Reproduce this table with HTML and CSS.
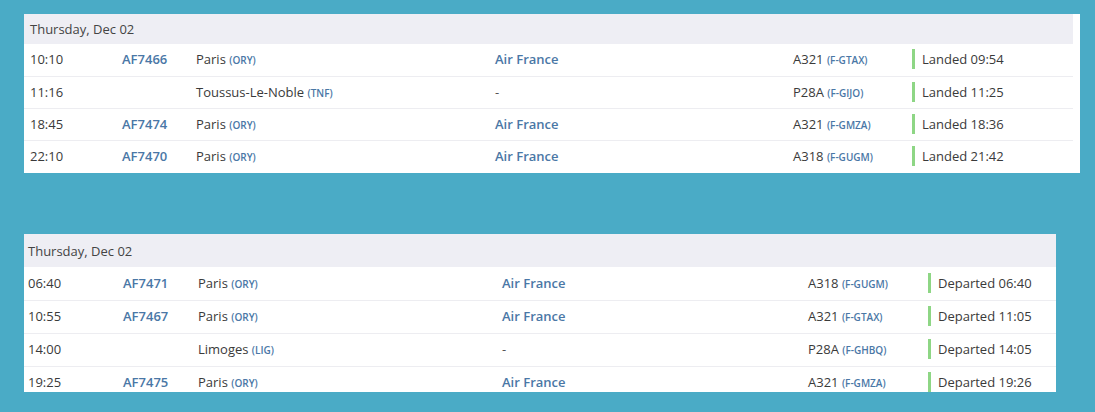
FILE: index.html
```html
<!DOCTYPE html>
<html>
<head>
<meta charset="utf-8">
<link rel="stylesheet" href="styles.css">
</head>
<body>
<section class="panel panel-arr">
  <div class="board">
    <div class="day">Thursday, Dec 02</div>
    <div class="row"><span>10:10</span><a class="flt">AF7466</a><span>Paris <small>(ORY)</small></span><a class="air">Air France</a><span>A321 <small>(F-GTAX)</small></span><span class="st"><span class="stat">Landed 09:54</span></span></div>
    <div class="row"><span>11:16</span><a class="flt"></a><span>Toussus-Le-Noble <small>(TNF)</small></span><span class="dash">-</span><span>P28A <small>(F-GIJO)</small></span><span class="st"><span class="stat">Landed 11:25</span></span></div>
    <div class="row"><span>18:45</span><a class="flt">AF7474</a><span>Paris <small>(ORY)</small></span><a class="air">Air France</a><span>A321 <small>(F-GMZA)</small></span><span class="st"><span class="stat">Landed 18:36</span></span></div>
    <div class="row"><span>22:10</span><a class="flt">AF7470</a><span>Paris <small>(ORY)</small></span><a class="air">Air France</a><span>A318 <small>(F-GUGM)</small></span><span class="st"><span class="stat">Landed 21:42</span></span></div>
  </div>
</section>
<section class="panel panel-dep">
  <div class="board">
    <div class="day">Thursday, Dec 02</div>
    <div class="row"><span>06:40</span><a class="flt">AF7471</a><span>Paris <small>(ORY)</small></span><a class="air">Air France</a><span>A318 <small>(F-GUGM)</small></span><span class="st"><span class="stat">Departed 06:40</span></span></div>
    <div class="row"><span>10:55</span><a class="flt">AF7467</a><span>Paris <small>(ORY)</small></span><a class="air">Air France</a><span>A321 <small>(F-GTAX)</small></span><span class="st"><span class="stat">Departed 11:05</span></span></div>
    <div class="row"><span>14:00</span><a class="flt"></a><span>Limoges <small>(LIG)</small></span><span class="dash">-</span><span>P28A <small>(F-GHBQ)</small></span><span class="st"><span class="stat">Departed 14:05</span></span></div>
    <div class="row"><span>19:25</span><a class="flt">AF7475</a><span>Paris <small>(ORY)</small></span><a class="air">Air France</a><span>A321 <small>(F-GMZA)</small></span><span class="st"><span class="stat">Departed 19:26</span></span></div>
  </div>
</section>
</body>
</html>
```
FILE: styles.css
```css
html, body {
  margin: 0;
  padding: 0;
}
body {
  background: #4aabc6;
  font-family: "Open Sans", "Liberation Sans", sans-serif;
  font-size: 13px;
  color: #3a3a3a;
  width: 1095px;
  height: 412px;
  overflow: hidden;
}
.panel {
  background: #ffffff;
  margin-left: 24px;
  overflow: hidden;
}
.panel-arr {
  margin-top: 14px;
  width: 1056px;
  height: 159px;
}
.panel-dep {
  margin-top: 61px;
  width: 1032px;
  height: 158px;
}
.panel-arr .board {
  width: 1049px;
  --cols: 92px 74px 299px 298px 119px 1fr;
  --pad: 6px;
  --rowh: 32px;
  --headh: 30px;
}
.panel-dep .board {
  width: 1032px;
  --cols: 95px 75px 304px 306px 120px 1fr;
  --pad: 4px;
  --rowh: 33px;
  --headh: 33px;
}
.day {
  background: #eeeef4;
  height: var(--headh);
  display: flex;
  align-items: center;
  padding-left: var(--pad);
  color: #444;
}
.row {
  display: grid;
  grid-template-columns: var(--cols);
  align-items: center;
  height: var(--rowh);
  box-sizing: border-box;
  padding-left: var(--pad);
  padding-bottom: 2px;
  border-top: 1px solid #ededf1;
  white-space: nowrap;
}
.day + .row {
  border-top: none;
}
.flt, .air {
  color: #4a77a6;
  font-weight: 600;
}
.dash {
  color: #555;
}
small {
  font-size: 10px;
  color: #4a77a6;
  font-weight: 600;
}
.st {
  display: flex;
  align-items: center;
}
.stat {
  border-left: 3px solid #8ed685;
  padding: 2px 0 2px 7px;
  line-height: 16px;
}
```
